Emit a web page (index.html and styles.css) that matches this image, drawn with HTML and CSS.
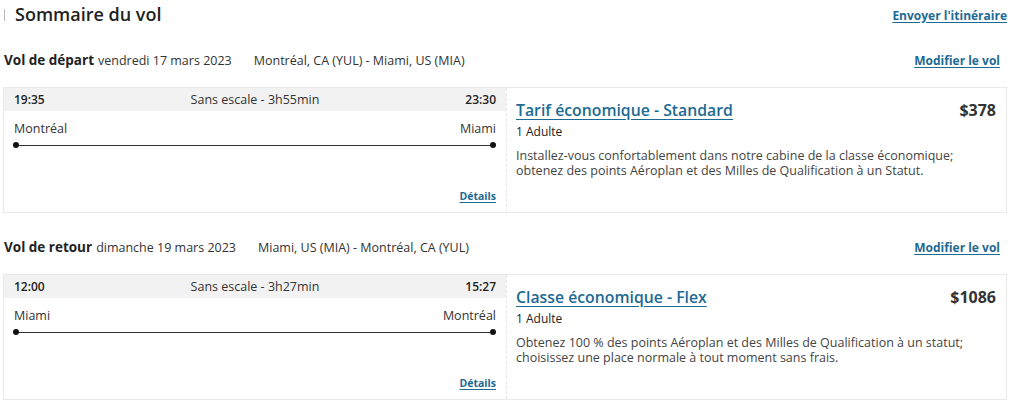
FILE: index.html
```html
<!DOCTYPE html>
<html lang="fr">
<head>
<meta charset="utf-8">
<title>Sommaire du vol</title>
<link rel="stylesheet" href="styles.css">
</head>
<body>
<div class="page">
  <header class="summary-head">
    <h1 class="summary-title"><span class="tick"></span>Sommaire du vol</h1>
    <a class="link send" href="#">Envoyer l'itinéraire</a>
  </header>

  <section class="leg">
    <div class="leg-head">
      <div class="leg-info">
        <strong class="leg-label">Vol de départ</strong>
        <span class="leg-date">vendredi 17 mars 2023</span>
        <span class="leg-route">Montréal, CA (YUL) - Miami, US (MIA)</span>
      </div>
      <a class="link modify" href="#">Modifier le vol</a>
    </div>
    <div class="card">
      <div class="flight">
        <div class="times">
          <span class="time">19:35</span>
          <span class="stops">Sans escale - 3h55min</span>
          <span class="time">23:30</span>
        </div>
        <div class="cities"><span>Montréal</span><span>Miami</span></div>
        <div class="track"><span class="dot"></span><span class="line"></span><span class="dot"></span></div>
        <div class="details"><a class="link" href="#">Détails</a></div>
      </div>
      <div class="fare">
        <div class="fare-head">
          <a class="fare-name" href="#">Tarif économique - Standard</a>
          <span class="price">$378</span>
        </div>
        <div class="pax">1 Adulte</div>
        <p class="desc">Installez-vous confortablement dans notre cabine de la classe économique; obtenez des points Aéroplan et des Milles de Qualification à un Statut.</p>
      </div>
    </div>
  </section>

  <section class="leg">
    <div class="leg-head">
      <div class="leg-info">
        <strong class="leg-label">Vol de retour</strong>
        <span class="leg-date">dimanche 19 mars 2023</span>
        <span class="leg-route">Miami, US (MIA) - Montréal, CA (YUL)</span>
      </div>
      <a class="link modify" href="#">Modifier le vol</a>
    </div>
    <div class="card">
      <div class="flight">
        <div class="times">
          <span class="time">12:00</span>
          <span class="stops">Sans escale - 3h27min</span>
          <span class="time">15:27</span>
        </div>
        <div class="cities"><span>Miami</span><span>Montréal</span></div>
        <div class="track"><span class="dot"></span><span class="line"></span><span class="dot"></span></div>
        <div class="details"><a class="link" href="#">Détails</a></div>
      </div>
      <div class="fare">
        <div class="fare-head">
          <a class="fare-name" href="#">Classe économique - Flex</a>
          <span class="price">$1086</span>
        </div>
        <div class="pax">1 Adulte</div>
        <p class="desc">Obtenez 100 % des points Aéroplan et des Milles de Qualification à un statut; choisissez une place normale à tout moment sans frais.</p>
      </div>
    </div>
  </section>
</div>
</body>
</html>
```

FILE: styles.css
```css
* { box-sizing: border-box; }
html, body { margin: 0; padding: 0; background: #fff; }
body {
  font-family: "Open Sans", "Noto Sans", "Liberation Sans", sans-serif;
  color: #333;
  font-size: 12.5px;
}
.page { padding: 0 17px 0 3px; width: 1024px; }

.link {
  color: #1d6a94;
  font-weight: 700;
  font-size: 12px;
  text-decoration: underline;
  text-underline-offset: 2px;
}

.summary-head {
  display: flex;
  justify-content: space-between;
  align-items: center;
  height: 28px;
}
.summary-title {
  margin: 0;
  display: flex;
  align-items: center;
  font-size: 18px;
  font-weight: 600;
  color: #222;
  line-height: 24px;
}
.tick {
  display: inline-block;
  width: 1px;
  height: 12px;
  background: #bbb;
  margin: 2px 10px 0 1px;
}
.send { margin-top: 2px; }

.leg { margin-top: 20px; }
.leg + .leg { margin-top: 22px; }
.leg-head {
  display: flex;
  justify-content: space-between;
  align-items: center;
  height: 24px;
  padding-left: 1px;
  margin-right: 7px;
}
.leg-info { display: flex; align-items: baseline; }
.leg-label { font-size: 13.5px; font-weight: 700; color: #222; }
.leg-date { margin-left: 4px; font-size: 12.5px; color: #333; }
.leg-route { margin-left: 22px; font-size: 12.5px; color: #333; }

.card {
  margin-top: 15px;
  display: flex;
  border: 1px solid #e9e9e9;
  height: 126px;
}
.flight {
  width: 502px;
  display: flex;
  flex-direction: column;
}
.times {
  display: flex;
  justify-content: space-between;
  align-items: center;
  background: #f2f2f2;
  height: 23px;
  padding: 0 10px;
}
.time { font-weight: 600; color: #222; font-size: 12px; }
.stops { color: #333; }
.cities {
  display: flex;
  justify-content: space-between;
  padding: 10px 10px 0;
  line-height: 16px;
  color: #333;
}
.track {
  display: flex;
  align-items: center;
  margin: 5px 10px 0 9px;
  height: 6px;
}
.dot {
  width: 6px; height: 6px;
  border-radius: 50%;
  background: #111;
  flex: none;
}
.line { flex: 1; height: 1px; background: #333; }
.details {
  margin-top: auto;
  padding: 0 10px 8px;
  text-align: right;
  line-height: 16px;
}
.details .link { font-size: 10.5px; }

.fare {
  flex: 1;
  border-left: 1px dashed #e6e6e6;
  padding: 11px 10px 0 9px;
}
.fare-head {
  display: flex;
  justify-content: space-between;
  align-items: center;
  line-height: 22px;
}
.fare-name {
  color: #1d6a94;
  font-size: 15.8px;
  font-weight: 600;
  text-decoration: underline;
  text-underline-offset: 3px;
}
.price { font-size: 16px; font-weight: 700; color: #333; }
.pax { margin-top: 2px; line-height: 17px; color: #222; font-size: 12px; }
.desc {
  margin: 8px 0 0;
  line-height: 15px;
  color: #444;
}
```
